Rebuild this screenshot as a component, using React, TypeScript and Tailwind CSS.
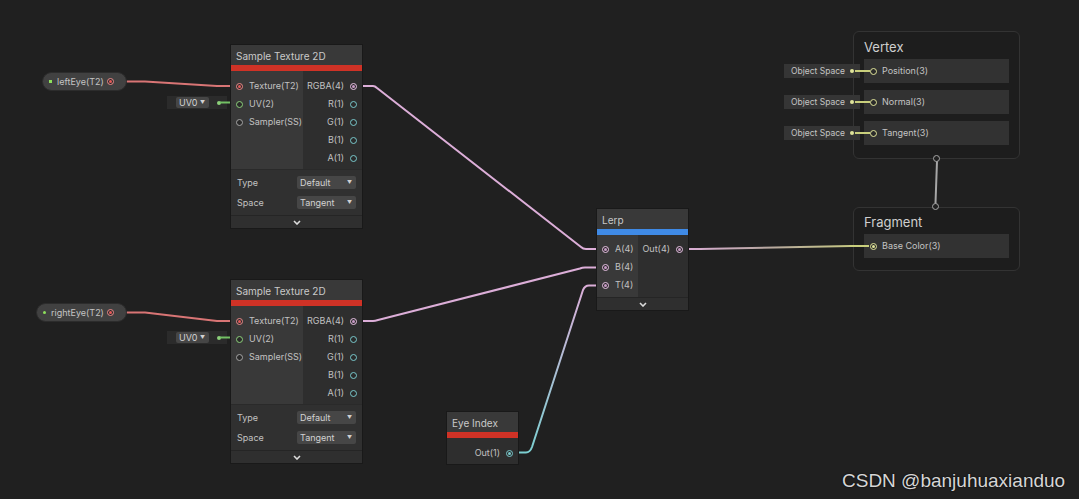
import React from 'react';

type PortKind = 'tex' | 'vec4' | 'vec1' | 'vec2' | 'sampler' | 'vec3';

const ringClass: Record<PortKind, string> = {
  tex: 'border-[#ec8a8a]',
  vec4: 'border-[#e9c2e5]',
  vec1: 'border-[#79c9cc]',
  vec2: 'border-[#8cd07a]',
  sampler: 'border-[#a5a5a5]',
  vec3: 'border-[#e0e49a]',
};

const dotClass: Record<PortKind, string> = {
  tex: 'bg-[#e65a5a]',
  vec4: 'bg-[#c99ac6]',
  vec1: 'bg-[#79c9cc]',
  vec2: 'bg-[#8cd07a]',
  sampler: 'bg-[#a5a5a5]',
  vec3: 'bg-[#e0e49a]',
};

function Port({ kind, filled = false }: { kind: PortKind; filled?: boolean }) {
  return (
    <span
      className={`flex h-[7px] w-[7px] shrink-0 items-center justify-center rounded-full border bg-[#2a2a2a] ${ringClass[kind]}`}
    >
      {filled && <span className={`h-[3px] w-[3px] rounded-full ${dotClass[kind]}`} />}
    </span>
  );
}

function Header({ title, bar }: { title: string; bar: string }) {
  return (
    <>
      <div className="flex h-[20px] items-center bg-[#393939] px-[5px] pt-[2px] text-[10px] text-[#c9c9c9]">
        {title}
      </div>
      <div className={`h-[6px] ${bar}`} />
    </>
  );
}

function Chevron() {
  return (
    <div className="flex h-[13px] items-center justify-center border-t border-[#252525] bg-[#2f2f2f]">
      <svg width="8" height="5" viewBox="0 0 8 5">
        <path d="M1 1 L4 4 L7 1" stroke="#dcdcdc" strokeWidth="1.6" fill="none" />
      </svg>
    </div>
  );
}

function InRow({ label, kind, filled }: { label: string; kind: PortKind; filled?: boolean }) {
  return (
    <div className="flex h-[18px] items-center gap-[6px] pl-[5px]">
      <Port kind={kind} filled={filled} />
      <span className="text-[9px] text-[#c2c2c2]">{label}</span>
    </div>
  );
}

function OutRow({ label, kind, filled }: { label: string; kind: PortKind; filled?: boolean }) {
  return (
    <div className="flex h-[18px] items-center justify-end gap-[6px] pr-[5px]">
      <span className="text-[9px] text-[#c2c2c2]">{label}</span>
      <Port kind={kind} filled={filled} />
    </div>
  );
}

function Dropdown({ value }: { value: string }) {
  return (
    <div className="flex h-[13px] w-[59px] items-center justify-between rounded-[2px] bg-[#464646] pl-[3px] pr-[4px] text-[9px] text-[#d2d2d2]">
      <span>{value}</span>
      <span className="text-[5px] text-[#cfcfcf]">▼</span>
    </div>
  );
}

function SampleTexture({ pos }: { pos: string }) {
  return (
    <div className={`absolute flex w-[133px] flex-col border border-[#191919] ${pos}`}>
      <Header title="Sample Texture 2D" bar="bg-[#cf3226]" />
      <div className="flex h-[98px]">
        <div className="w-[72px] bg-[#393939] pt-[6px]">
          <InRow label="Texture(T2)" kind="tex" filled />
          <InRow label="UV(2)" kind="vec2" />
          <InRow label="Sampler(SS)" kind="sampler" />
        </div>
        <div className="flex-1 bg-[#2e2e2e] pt-[6px]">
          <OutRow label="RGBA(4)" kind="vec4" filled />
          <OutRow label="R(1)" kind="vec1" />
          <OutRow label="G(1)" kind="vec1" />
          <OutRow label="B(1)" kind="vec1" />
          <OutRow label="A(1)" kind="vec1" />
        </div>
      </div>
      <div className="flex h-[46px] flex-col gap-[6px] border-t border-[#2a2a2a] bg-[#303030] py-[6px] pl-[6px] pr-[6px]">
        <div className="flex h-[14px] items-center justify-between text-[9px] text-[#c2c2c2]">
          <span>Type</span>
          <Dropdown value="Default" />
        </div>
        <div className="flex h-[14px] items-center justify-between text-[9px] text-[#c2c2c2]">
          <span>Space</span>
          <Dropdown value="Tangent" />
        </div>
      </div>
      <Chevron />
    </div>
  );
}

function PropertyPill({ pos, label, square }: { pos: string; label: string; square?: boolean }) {
  return (
    <div
      className={`absolute flex h-[19px] items-center rounded-full border border-[#2c2c2c] bg-[#414141] pl-[6px] pr-[12px] ${pos}`}
    >
      <span className={`h-[3px] w-[3px] shrink-0 bg-[#8de05c] ${square ? '' : 'rounded-full'}`} />
      <span className="ml-[5px] whitespace-nowrap text-[9px] text-[#c4c4c4]">{label}</span>
      <span className="ml-auto">
        <Port kind="tex" filled />
      </span>
    </div>
  );
}

function UvField({ pos }: { pos: string }) {
  return (
    <div className={`absolute flex h-[13px] w-[60px] items-center bg-[#2b2b2b] pl-[9px] ${pos}`}>
      <div className="flex h-[11px] w-[33px] items-center justify-between rounded-[2px] bg-[#464646] pl-[3px] pr-[4px] text-[9px] text-[#d2d2d2]">
        <span>UV0</span>
        <span className="text-[5px]">▼</span>
      </div>
      <span className="ml-[8px] h-[4px] w-[4px] rounded-full bg-[#8cd07a]" />
    </div>
  );
}

function ObjectSpace({ pos }: { pos: string }) {
  return (
    <div className={`absolute flex h-[14px] w-[76px] items-center bg-[#353535] pl-[7px] text-[8.5px] text-[#c4c4c4] ${pos}`}>
      <span>Object Space</span>
      <span className="ml-auto mr-[6px] h-[4px] w-[4px] rounded-full bg-[#e0e49a]" />
    </div>
  );
}

function Slot({ label, filled }: { label: string; filled?: boolean }) {
  return (
    <div className="flex h-[24px] items-center gap-[5px] bg-[#323232] pl-[6px] text-[9px] text-[#c4c4c4]">
      <Port kind="vec3" filled={filled} />
      <span>{label}</span>
    </div>
  );
}

export default function App() {
  return (
    <div className="relative h-[499px] w-[1079px] overflow-hidden bg-[#202020] font-['Inter','Noto_Sans',sans-serif]">
      <svg className="absolute inset-0" width="1079" height="499" fill="none">
        <defs>
          <linearGradient id="eyeWire" gradientUnits="userSpaceOnUse" x1="0" y1="452" x2="0" y2="286">
            <stop offset="0" stopColor="#7ccfd1" />
            <stop offset="1" stopColor="#dcaed8" />
          </linearGradient>
          <linearGradient id="outWire" gradientUnits="userSpaceOnUse" x1="683" y1="0" x2="870" y2="0">
            <stop offset="0" stopColor="#dcaed8" />
            <stop offset="0.45" stopColor="#b7a7a0" />
            <stop offset="1" stopColor="#c9cf7c" />
          </linearGradient>
        </defs>
        <g strokeWidth="2" strokeLinejoin="round" strokeLinecap="round">
          <path d="M127 81.5 L145 81.5 L217 86 L236 86" stroke="#d97575" />
          <path d="M127 312.5 L145 312.5 L217 321 L236 321" stroke="#d97575" />
          <path d="M357 86 L373 86 Q375 86 377 88 L581 247 Q583 249 586 249 L602 249" stroke="#dcaed8" />
          <path d="M357 321 L373 321 Q375 321 378 320 L580 268.5 Q582 267.5 585 267.5 L602 267.5" stroke="#dcaed8" />
          <path d="M512 452.5 L526 452.5 Q530 452.5 532 447 L583 290 Q585 285.5 589 285.5 L602 285.5" stroke="url(#eyeWire)" />
          <path d="M683 249 L700 249 L851 246 L870 246" stroke="url(#outWire)" />
          <path d="M937 161 L935.5 203" stroke="#a6a6a6" />
        </g>
      </svg>

      <PropertyPill pos="left-[42px] top-[72px] w-[85px]" label="leftEye(T2)" square />
      <PropertyPill pos="left-[36px] top-[303px] w-[91px]" label="rightEye(T2)" />

      <UvField pos="left-[167px] top-[96px]" />
      <UvField pos="left-[167px] top-[331px]" />

      {/* UV links, drawn over the field boxes */}
      <svg className="absolute left-[218px] top-[98px]" width="20" height="8" fill="none">
        <path d="M2 4.5 L18 4.5" strokeWidth="2" stroke="#73c064" />
      </svg>
      <svg className="absolute left-[218px] top-[333px]" width="20" height="8" fill="none">
        <path d="M2 4.5 L18 4.5" strokeWidth="2" stroke="#73c064" />
      </svg>

      <SampleTexture pos="left-[230px] top-[44px]" />
      <SampleTexture pos="left-[230px] top-[279px]" />

      {/* Lerp */}
      <div className="absolute left-[596px] top-[208px] flex w-[93px] flex-col border border-[#191919]">
        <Header title="Lerp" bar="bg-[#3f8ae6]" />
        <div className="flex h-[62px]">
          <div className="w-[41px] bg-[#393939] pt-[5px]">
            <InRow label="A(4)" kind="vec4" filled />
            <InRow label="B(4)" kind="vec4" filled />
            <InRow label="T(4)" kind="vec4" filled />
          </div>
          <div className="flex-1 bg-[#2e2e2e] pt-[5px]">
            <OutRow label="Out(4)" kind="vec4" filled />
          </div>
        </div>
        <Chevron />
      </div>

      {/* Eye Index */}
      <div className="absolute left-[446px] top-[411px] flex w-[73px] flex-col border border-[#191919]">
        <Header title="Eye Index" bar="bg-[#cf3226]" />
        <div className="h-[26px] bg-[#2e2e2e] pt-[6px]">
          <OutRow label="Out(1)" kind="vec1" filled />
        </div>
      </div>

      {/* Vertex context */}
      <div className="absolute left-[853px] top-[31px] flex h-[128px] w-[167px] flex-col rounded-[6px] border border-[#333333] bg-[#1d1d1d] px-[10px] pt-[7px]">
        <div className="h-[16px] text-[13px] leading-[16px] text-[#cfcfcf]">Vertex</div>
        <div className="mt-[4px] flex flex-col gap-[7px]">
          <Slot label="Position(3)" />
          <Slot label="Normal(3)" />
          <Slot label="Tangent(3)" />
        </div>
      </div>
      <div className="absolute left-[933px] top-[155px] h-[7px] w-[7px] rounded-full border border-[#a6a6a6] bg-[#202020]" />

      {/* Fragment context */}
      <div className="absolute left-[853px] top-[207px] flex h-[64px] w-[167px] flex-col rounded-[6px] border border-[#333333] bg-[#1d1d1d] px-[10px] pt-[6px]">
        <div className="h-[16px] text-[13px] leading-[16px] text-[#cfcfcf]">Fragment</div>
        <div className="mt-[4px]">
          <Slot label="Base Color(3)" filled />
        </div>
      </div>
      <div className="absolute left-[932px] top-[203px] h-[7px] w-[7px] rounded-full border border-[#a6a6a6] bg-[#202020]" />

      <ObjectSpace pos="left-[784px] top-[64px]" />
      <ObjectSpace pos="left-[784px] top-[95px]" />
      <ObjectSpace pos="left-[784px] top-[126px]" />

      {/* short links from the Object Space fields into the vertex slots, drawn over the context box */}
      <svg className="absolute left-[853px] top-[60px]" width="24" height="80" fill="none">
        <g strokeWidth="2" stroke="#c9cf7c">
          <path d="M2 11 L17 11" />
          <path d="M2 42 L17 42" />
          <path d="M2 73 L17 73" />
        </g>
      </svg>
      <svg className="absolute left-[850px] top-[242px]" width="22" height="8" fill="none">
        <path d="M0 4 L19 4" strokeWidth="2" stroke="#c9cf7c" />
      </svg>

      <div className="absolute left-[842px] top-[467px] font-['Liberation_Sans',Arial,sans-serif] text-[19px] text-[#d6d6d6] [text-shadow:0_0_2px_#000]">
        CSDN @banjuhuaxianduo
      </div>
    </div>
  );
}
